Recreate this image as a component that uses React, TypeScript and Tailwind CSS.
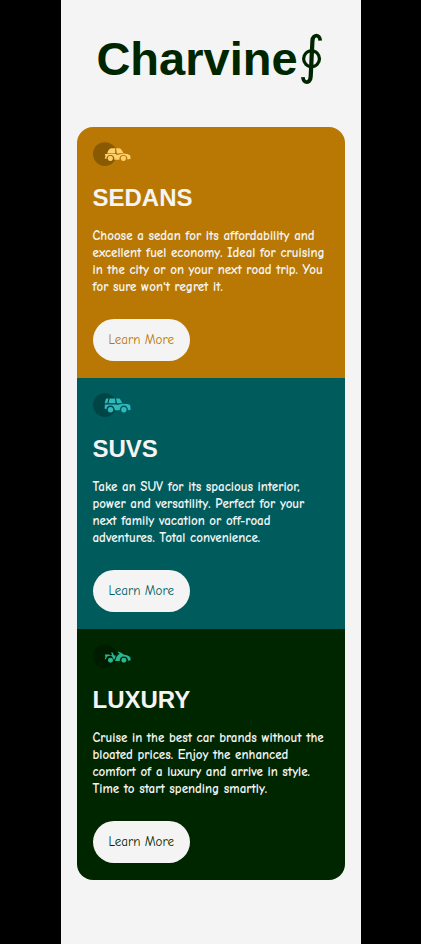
import type { ReactNode } from "react";

type Card = {
  title: string;
  lines: string[];
  background: string;
  buttonText: string;
  iconColor: string;
  icon: ReactNode;
};

const sedan = (
  <>
    <path d="M24 18.5C25.5 14.5 27.5 11 31 10.500h6.500V19H24z M39 10.500h4.500c3 0 5.500 3.500 7.500 7.700L40 19z" />
    <path d="M20 20h18.500l2 1.500L51 19c5 .3 9.500 1.300 11.500 3.300l1 5.700-5.500 1.200c.3-5-2.800-7.700-6.800-7.700-4.500 0-7.200 3.500-6.700 8H36c.3-5-2.500-8-6.800-8-4 0-6.700 2.800-6.700 6.800L19.500 27l1.500-3z" />
    <circle cx="29.200" cy="27.300" r="4.300" />
    <circle cx="51.200" cy="27.300" r="4.300" />
  </>
);

const suv = (
  <>
    <path d="M22 9h4l-2 8h-4.500z M28 9h9l1 8H26z M39 9h5c2.500 1.500 4 4.500 5 7.500L40.500 17z" />
    <path d="M20 19h19l2 1 9-2c5 .2 10 .8 12.500 2l1 8-4.500 1c0-5-3-8-7-8s-7 3-7 8h-8.500c0-5-3-8-7-8s-6.500 2.500-7 6.500L19.500 26z" />
    <circle cx="29.500" cy="28" r="4.500" />
    <circle cx="52" cy="28" r="4.500" />
  </>
);

const luxury = (
  <>
    <path d="M20 17.500h7l3 1.500 2-.5-1.500-4.500h2.500l2.500 5h3l-2 6.500-2 .5c-.5-4-3-6.500-6-6.500-3.500 0-6 2-6.500 5.500L19.500 26l1.500-4z" />
    <path d="M42 12.500c5 1.500 8 3.500 10.500 5.500 5 .3 9 2 10.500 5l.5 4-4.500 1c0-4.500-3-7-7-7-4.500 0-7 3-7 7.500h-8l3-7.500 3-3.500 2-1-3-3z" />
    <circle cx="29.500" cy="27" r="4.200" />
    <circle cx="52" cy="27" r="4.200" />
  </>
);

const cards: Card[] = [
  {
    title: "SEDANS",
    lines: [
      "Choose a sedan for its affordability and",
      "excellent fuel economy. Ideal for cruising",
      "in the city or on your next road trip. You",
      "for sure won't regret it.",
    ],
    background: "bg-[#b87803]",
    buttonText: "text-[#b87803]",
    iconColor: "text-[#ffd06b]",
    icon: sedan,
  },
  {
    title: "SUVS",
    lines: [
      "Take an SUV for its spacious interior,",
      "power and versatility. Perfect for your",
      "next family vacation or off-road",
      "adventures. Total convenience.",
    ],
    background: "bg-[#005c5c]",
    buttonText: "text-[#005c5c]",
    iconColor: "text-[#2fb9bd]",
    icon: suv,
  },
  {
    title: "LUXURY",
    lines: [
      "Cruise in the best car brands without the",
      "bloated prices. Enjoy the enhanced",
      "comfort of a luxury and arrive in style.",
      "Time to start spending smartly.",
    ],
    background: "bg-[#002600]",
    buttonText: "text-[#002600]",
    iconColor: "text-[#2bb592]",
    icon: luxury,
  },
];

const comic = "font-['Comic_Neue','Comic_Sans_MS','Open_Sans',sans-serif]";

export default function App() {
  return (
    <div className="min-h-screen bg-black font-['Liberation_Sans',Arial,sans-serif]">
      <main className="mx-auto min-h-screen max-w-[300px] bg-[#f4f4f4] px-4 pb-16">
        <h1 className="flex h-[127px] items-center justify-center pb-2 text-[47px] font-bold text-[#002600]">
          Charvine
          <span className="pb-2 text-[52px] font-['Liberation_Serif','DejaVu_Serif',serif] font-normal">∮</span>
        </h1>
        <div className="overflow-hidden rounded-2xl">
          {cards.map((card) => (
            <section key={card.title} className={`px-4 pt-[15px] pb-[17px] ${card.background}`}>
              <svg viewBox="0 0 64 40" className={`h-6 w-[38px] ${card.iconColor}`} fill="currentColor" aria-hidden="true">
                <circle cx="20" cy="20" r="20" fill="#000" fillOpacity="0.25" />
                {card.icon}
              </svg>
              <h2 className="mt-4 text-2xl font-bold text-[#f4f4f4]">{card.title}</h2>
              <p className={`mt-[13px] text-[13px] leading-[17px] font-semibold whitespace-nowrap text-[#f4f4f4] ${comic}`}>
                {card.lines.map((line) => (
                  <span key={line} className="block">{line}</span>
                ))}
              </p>
              <button type="button" className={`mt-6 block h-[42px] rounded-full bg-[#f4f4f4] px-4 text-[13px] ${card.buttonText} ${comic}`}>
                Learn More
              </button>
            </section>
          ))}
        </div>
      </main>
    </div>
  );
}
